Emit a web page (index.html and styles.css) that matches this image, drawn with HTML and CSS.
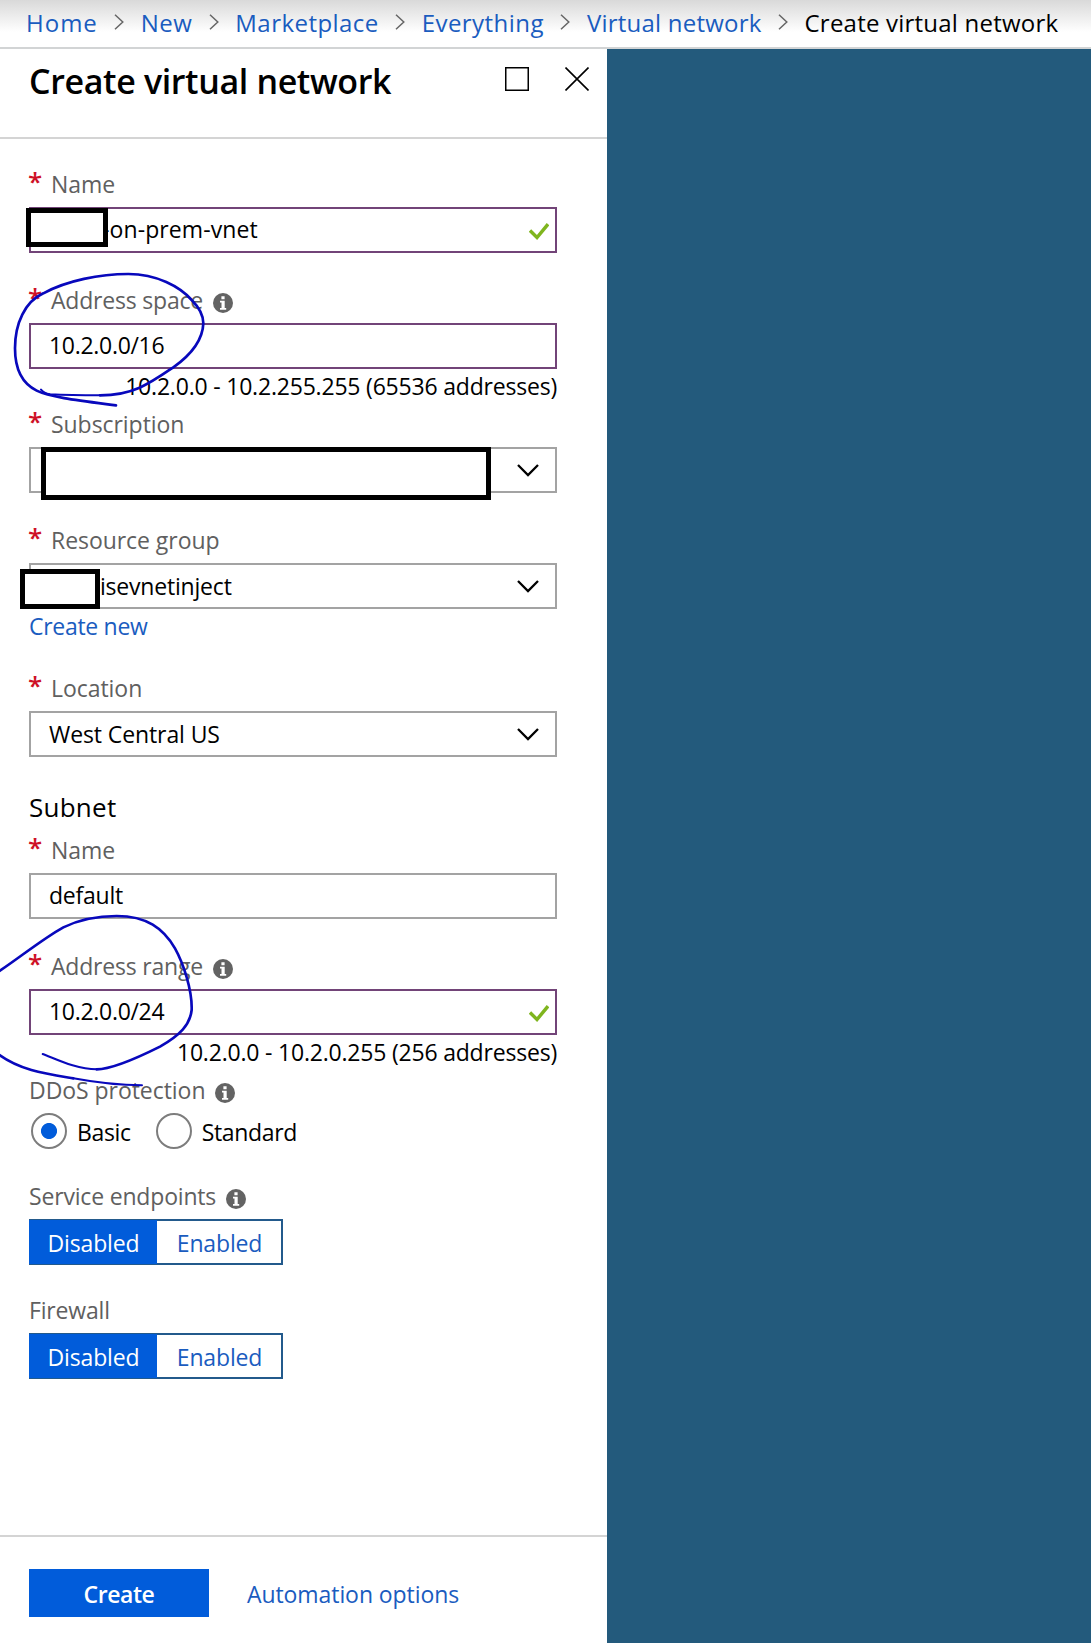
FILE: index.html
```html
<!DOCTYPE html>
<html lang="en">
<head>
<meta charset="utf-8">
<title>Create virtual network</title>
<link rel="stylesheet" href="styles.css">
</head>
<body>
<svg class="symbols" aria-hidden="true">
  <symbol id="crumb" viewBox="0 0 10 16"><path d="M1 .7 8.8 8 1 15.3" fill="none" stroke="#666" stroke-width="1.5"/></symbol>
  <symbol id="chevron" viewBox="0 0 22 13"><path d="M1 1 11 11 21 1" fill="none" stroke="#000" stroke-width="2.3"/></symbol>
  <symbol id="check" viewBox="0 0 20 17"><path d="M1 7.5 8 14.5 19 1.2" fill="none" stroke="#7fb51e" stroke-width="3.4"/></symbol>
  <symbol id="info" viewBox="0 0 20 20"><circle cx="10" cy="10" r="10" fill="#636363"/><path d="M8.4 3.3h3.2v2.9H8.4zM7 7.8h4.7v7.2h1.5v1.8H7v-1.8h1.5V9.6H7z" fill="#fff"/></symbol>
</svg>

<nav class="breadcrumb">
  <a class="crumb crumb-home">Home</a>
  <svg class="crumb-sep"><use href="#crumb"/></svg>
  <a class="crumb">New</a>
  <svg class="crumb-sep"><use href="#crumb"/></svg>
  <a class="crumb">Marketplace</a>
  <svg class="crumb-sep"><use href="#crumb"/></svg>
  <a class="crumb">Everything</a>
  <svg class="crumb-sep"><use href="#crumb"/></svg>
  <a class="crumb crumb-long">Virtual network</a>
  <svg class="crumb-sep"><use href="#crumb"/></svg>
  <span class="crumb crumb-long crumb-current">Create virtual network</span>
</nav>

<main class="blade">
  <header class="blade-header">
    <h1 class="blade-title">Create virtual network</h1>
    <div class="window-buttons">
      <svg class="window-icon" viewBox="0 0 24 24"><path d="M.75 .75h22.5v22.5H.75z" fill="none" stroke="#000" stroke-width="1.5"/></svg>
      <svg class="window-icon" viewBox="0 0 24 24"><path d="M.5 .5 23.5 23.5M23.5 .5 .5 23.5" fill="none" stroke="#000" stroke-width="1.6"/></svg>
    </div>
  </header>

  <form class="form">
    <div class="field">
      <div class="label"><span class="star">*</span><span>Name</span></div>
      <div class="box valid">
        <span class="after-mask name-text">-on-prem-vnet</span>
        <svg class="check"><use href="#check"/></svg>
        <span class="mask mask-name"></span>
      </div>
    </div>

    <div class="field">
      <div class="label"><span class="star">*</span><span class="tight">Address space</span><svg class="info"><use href="#info"/></svg></div>
      <div class="box valid"><span class="ip">10.2.0.0/16</span></div>
      <div class="hint">10.2.0.0 - 10.2.255.255 (65536 addresses)</div>
    </div>

    <div class="field">
      <div class="label"><span class="star">*</span><span>Subscription</span></div>
      <div class="box select">
        <svg class="chevron"><use href="#chevron"/></svg>
        <span class="mask mask-subscription"></span>
      </div>
    </div>

    <div class="field">
      <div class="label"><span class="star">*</span><span>Resource group</span></div>
      <div class="box select">
        <span class="after-mask group-text">isevnetinject</span>
        <svg class="chevron"><use href="#chevron"/></svg>
        <span class="mask mask-group"></span>
      </div>
      <a class="create-new">Create new</a>
    </div>

    <div class="field">
      <div class="label"><span class="star">*</span><span>Location</span></div>
      <div class="box select"><span class="location-text">West Central US</span><svg class="chevron"><use href="#chevron"/></svg></div>
    </div>

    <h2 class="section-title">Subnet</h2>

    <div class="field">
      <div class="label"><span class="star">*</span><span>Name</span></div>
      <div class="box"><span class="default-text">default</span></div>
    </div>

    <div class="field">
      <div class="label"><span class="star">*</span><span class="tight">Address range</span><svg class="info"><use href="#info"/></svg></div>
      <div class="box valid"><span class="ip">10.2.0.0/24</span><svg class="check"><use href="#check"/></svg></div>
      <div class="hint">10.2.0.0 - 10.2.0.255 (256 addresses)</div>
    </div>

    <div class="field">
      <div class="label"><span>DDoS protection</span><svg class="info"><use href="#info"/></svg></div>
      <div class="radios">
        <span class="radio radio-on"></span><span class="radio-text">Basic</span>
        <span class="radio"></span><span class="radio-text">Standard</span>
      </div>
    </div>

    <div class="field">
      <div class="label"><span class="endpoints">Service endpoints</span><svg class="info"><use href="#info"/></svg></div>
      <div class="toggle"><span class="option selected">Disabled</span><span class="option">Enabled</span></div>
    </div>

    <div class="field">
      <div class="label"><span class="endpoints">Firewall</span></div>
      <div class="toggle"><span class="option selected">Disabled</span><span class="option">Enabled</span></div>
    </div>
  </form>

  <footer class="blade-footer">
    <button class="create" type="button">Create</button>
    <a class="automation">Automation options</a>
  </footer>
</main>

<svg class="ink" viewBox="0 0 607 1643" aria-hidden="true">
  <g fill="none" stroke="#0808bc" stroke-linecap="round" stroke-linejoin="round">
    <g transform="translate(0 150) scale(.33333)">
      <path stroke-width="8" d="M300 736C400 736 450 700 520 652C565 620 608 575 610 520C610 500 600 475 575 450C540 410 470 372 385 372C300 372 200 392 130 430C75 455 45 520 45 595C45 640 55 695 110 722C150 742 240 752 348 766"/>
      <path stroke-width="6" d="M300 736C240 736 190 735 150 733C138 731 130 728 123 719"/>
    </g>
    <g transform="translate(0 900) scale(.33333)">
      <path stroke-width="8" d="M-6 216C60 172 130 115 190 82C240 58 300 48 350 48C440 48 490 85 525 145C550 190 577 270 575 330C570 375 540 405 480 440C420 470 340 508 290 508"/>
      <path stroke-width="6" d="M290 508C230 508 170 478 128 462"/>
      <path stroke-width="8" d="M-6 462C60 512 140 522 220 535"/>
      <path stroke-width="6" d="M220 535C290 548 350 556 426 556"/>
    </g>
  </g>
</svg>
</body>
</html>
```
FILE: styles.css
```css
* { box-sizing: border-box; }

body {
  position: relative;
  display: flex;
  flex-direction: column;
  height: 1643px;
  margin: 0;
  overflow: hidden;
  background: #235a7c;
  color: #000;
  font: 23px/30px "Open Sans", "Noto Sans", sans-serif;
}

.symbols { position: absolute; width: 0; height: 0; }

/* breadcrumb */
.breadcrumb {
  display: flex;
  align-items: center;
  gap: 16.5px;
  height: 49px;
  padding: 0 0 2px 26px;
  border-bottom: 2px solid #d2d4d5;
  background: linear-gradient(#d9d9d9, #fff 32px);
  font-size: 24px;
  white-space: nowrap;
}
.crumb { color: #1a5cbf; letter-spacing: .45px; }
.crumb-home { letter-spacing: 1px; }
.crumb-long { letter-spacing: .22px; }
.crumb-current { color: #000; }
.crumb-sep { flex: none; width: 10px; height: 16px; margin-top: -1px; }

/* blade */
.blade {
  display: flex;
  flex: 1;
  flex-direction: column;
  width: 607px;
  background: #fff;
}
.blade-header {
  display: flex;
  justify-content: space-between;
  height: 90px;
  padding: 9px 18px 0 29px;
  border-bottom: 2px solid #d4d4d4;
}
.blade-title {
  margin: 0;
  font-size: 34px;
  font-weight: 600;
  line-height: 46px;
  letter-spacing: -.36px;
}
.window-buttons { display: flex; gap: 36px; padding-top: 9px; }
.window-icon { width: 24px; height: 24px; }

/* form */
.form { flex: 1; padding: 30px 50px 0 29px; }
.field { margin-bottom: 32px; }
.field:has(.hint) { margin-bottom: 8px; }
.field:has(.toggle) { margin-bottom: 30px; }
.label {
  display: flex;
  height: 30px;
  margin-bottom: 8px;
  color: #606060;
  letter-spacing: -.05px;
}
.tight { letter-spacing: -.2px; }
.endpoints { letter-spacing: -.18px; }
.star {
  width: 23px;
  margin: -3px 0 0 -1px;
  color: #ce1126;
  font-size: 26px;
  font-weight: 600;
}
.info { width: 20px; height: 20px; margin: 8px 0 0 10px; }

.box {
  position: relative;
  display: flex;
  align-items: center;
  justify-content: space-between;
  height: 46px;
  padding: 0 22px 2px 18px;
  border: 2px solid #a3a3a3;
}
.select { padding-bottom: 0; }
.valid { border-color: #724478; }
.ip { letter-spacing: -.3px; }
.default-text { letter-spacing: -.24px; }
.location-text { letter-spacing: -.1px; }
.after-mask { letter-spacing: .1px; }
.name-text { margin-left: 53px; }
.group-text { margin-left: 51px; letter-spacing: -.2px; }
.chevron { width: 22px; height: 13px; margin: 0 -6px 0 auto; }
.check { width: 20px; height: 17px; margin: 4px -16px 0 auto; }

/* blanked-out values */
.mask { position: absolute; border: 5px solid #000; background: #fff; }
.mask-name { left: -5px; top: -1px; width: 82px; height: 39px; }
.mask-subscription { left: 10px; top: -2px; width: 450px; height: 53px; }
.mask-group { left: -11px; top: 4px; width: 80px; height: 40px; }

.hint {
  margin-top: 2px;
  letter-spacing: -.2px;
  text-align: right;
}
.create-new {
  display: block;
  margin-top: 2px;
  color: #1a5cbf;
  letter-spacing: -.3px;
}
.section-title {
  margin: 0 0 10px;
  font-size: 26px;
  font-weight: 400;
  line-height: 36px;
  letter-spacing: .25px;
}

.radios { display: flex; align-items: center; height: 36px; padding-left: 2px; }
.radio {
  width: 36px;
  height: 36px;
  border: 2px solid #7d7d7d;
  border-radius: 50%;
}
.radio-on { background: radial-gradient(circle, #015cda 7.6px, #fff 8.4px); }
.radio-text { margin: 2px 25px 0 10px; letter-spacing: -.35px; }

.toggle {
  display: flex;
  width: 254px;
  height: 46px;
  border: 2px solid #235a8c;
}
.option {
  flex: 1;
  padding-left: 1px;
  color: #1a5cbf;
  line-height: 45px;
  letter-spacing: -.15px;
  text-align: center;
}
.selected {
  flex: none;
  width: 128px;
  margin: -1px 0 -1px -2px;
  background: #015cda;
  color: #fff;
  line-height: 47px;
}

/* footer */
.blade-footer {
  display: flex;
  align-items: flex-start;
  height: 108px;
  padding: 32px 29px 0;
  border-top: 2px solid #d4d4d4;
}
.create {
  width: 180px;
  height: 48px;
  padding: 1px 0 0;
  border: 0;
  background: #015cda;
  color: #fff;
  font: 600 23px/48px "Open Sans", "Noto Sans", sans-serif;
  letter-spacing: -.44px;
}
.automation { margin-left: 38px; color: #1a5cbf; line-height: 50px; letter-spacing: -.08px; }

/* pen marks over the form */
.ink { position: absolute; left: 0; top: 0; width: 607px; height: 1643px; pointer-events: none; }
```
